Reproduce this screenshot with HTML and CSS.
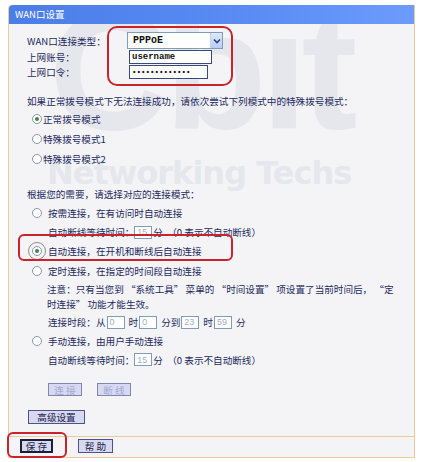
FILE: index.html
```html
<!DOCTYPE html>
<html lang="zh-CN">
<head>
  <meta charset="UTF-8" />
  <title>WAN口设置</title>
  <link rel="stylesheet" href="styles.css">
</head>
<body>

<div class="page">
  <div class="panel">
    <div class="wm wm-logo">Cbit</div>
    <div class="wm wm-text">Networking Techs</div>

    <div class="title">WAN口设置</div>

    <div class="content">
      <div class="form-grid">
        <label class="row-a">WAN口连接类型：</label>
        <div class="select row-a">
          <span>PPPoE</span>
          <span class="arrow">
            <svg width="8" height="6" viewBox="0 0 8 6"><path d="M1 1.5 L4 4.5 L7 1.5" fill="none" stroke="#2a3f8a" stroke-width="1.6"/></svg>
          </span>
        </div>
        <label class="row-b">上网账号：</label>
        <div class="row-b"><input class="text-in user" type="text" value="username"></div>
        <label class="row-c">上网口令：</label>
        <div class="row-c"><input class="text-in pass" type="password" value="abcdefghijklm"></div>
      </div>

      <p class="para p1">如果正常拨号模式下无法连接成功，请依次尝试下列模式中的特殊拨号模式：</p>
      <div class="dial">
        <div class="opt"><span class="radio on"></span>正常拨号模式</div>
        <div class="opt"><span class="radio"></span>特殊拨号模式1</div>
        <div class="opt"><span class="radio"></span>特殊拨号模式2</div>
      </div>

      <p class="para p2">根据您的需要，请选择对应的连接模式：</p>
      <div class="modes">
        <div class="opt h20"><span class="radio"></span>按需连接，在有访问时自动连接</div>
        <div class="sub h18">自动断线等待时间：<input class="mini" value="15">分&nbsp; （0 表示不自动断线）</div>
        <div class="opt h20"><span class="radio on focus"></span>自动连接，在开机和断线后自动连接</div>
        <div class="opt h19"><span class="radio"></span>定时连接，在指定的时间段自动连接</div>
        <p class="note">注意：只有当您到 “系统工具” 菜单的 “时间设置” 项设置了当前时间后， “定<br>时连接” 功能才能生效。</p>
        <div class="sub h18 times">连接时段：从<input class="mini" value="0">时<input class="mini" value="0">分到<input class="mini" value="23">时<input class="mini" value="59">分</div>
        <div class="opt h20"><span class="radio"></span>手动连接，由用户手动连接</div>
        <div class="sub h17">自动断线等待时间：<input class="mini" value="15">分&nbsp; （0 表示不自动断线）</div>
      </div>

      <div class="btn-row">
        <button class="btn off" disabled>连 接</button>
        <button class="btn off" disabled>断 线</button>
      </div>
      <button class="btn adv">高级设置</button>
    </div>

    <div class="footer">
      <button class="btn save">保 存</button>
      <button class="btn help">帮 助</button>
    </div>
  </div>

  <div class="mark mark-top"></div>
  <div class="mark mark-mode"></div>
  <div class="mark mark-save"></div>
</div>

</body>
</html>
```

FILE: styles.css
```css
* {
  margin: 0;
  padding: 0;
  box-sizing: border-box;
}

body {
  background: #fff;
  font-family: "Noto Sans CJK SC", "DejaVu Sans", sans-serif;
  font-size: 9.6px;
  color: #1d2a5e;
}

.page {
  position: relative;
  width: 423px;
  height: 462px;
  padding: 5px 0 0 8px;
}

.panel {
  position: relative;
  width: 407px;
  background: #f4f4f6;
  border: 1px solid #eccb95;
  border-top: none;
  border-radius: 4px 0 0 0;
}

/* watermark */
.wm {
  position: absolute;
  z-index: 0;
  color: #e6e7ed;
  font-family: "Liberation Sans", sans-serif;
  font-weight: bold;
  white-space: nowrap;
  pointer-events: none;
}

.wm-logo {
  left: 40px;
  top: -18px;
  font-size: 168px;
  line-height: 1;
  letter-spacing: -6px;
}

.wm-text {
  left: 38px;
  top: 152px;
  font-size: 32px;
  line-height: 1;
  font-family: "DejaVu Sans", sans-serif;
  letter-spacing: -1px;
}

.title {
  position: relative;
  z-index: 1;
  height: 19px;
  line-height: 19px;
  padding-left: 6px;
  background: linear-gradient(90deg, #4b7de8 0%, #5a8cf4 60%, #6b9cfc 100%);
  color: #fff;
  font-size: 9.5px;
  border-radius: 4px 0 0 0;
}

.content {
  position: relative;
  z-index: 1;
  padding: 8px 0 12px 18px;
  border-bottom: 1px solid #eccb95;
}

.form-grid {
  display: grid;
  grid-template-columns: 100px auto;
  grid-template-rows: 17px 15px 16px;
  align-items: center;
}

.select {
  display: flex;
  align-items: center;
  justify-content: space-between;
  width: 96px;
  height: 17px;
  background: #fff;
  border: 1px solid #7f9db9;
  padding-left: 5px;
  font-family: "Liberation Mono", monospace;
  font-weight: bold;
  font-size: 10px;
  color: #111;
}

.arrow {
  display: flex;
  align-items: center;
  justify-content: center;
  width: 12px;
  height: 15px;
  background: linear-gradient(#dfe8fb, #b9cdf4);
  border-left: 1px solid #c4d2ee;
}

.text-in {
  display: block;
  margin-left: 2px;
  height: 14px;
  border: 1px solid #394a78;
  background: #fff;
  padding: 0 2px;
  font-family: "Liberation Mono", monospace;
  font-weight: bold;
  font-size: 9px;
  color: #111;
  outline: none;
}

.user {
  width: 83px;
}

.pass {
  width: 79px;
  font-size: 7.5px;
}

.para {
  line-height: 14px;
  white-space: nowrap;
}

.p1 {
  margin-top: 14px;
}

.p2 {
  margin-top: 18px;
}

.dial {
  margin-top: 1px;
}

.opt {
  display: flex;
  align-items: center;
  height: 20px;
  padding-left: 5px;
  white-space: nowrap;
}

.dial .radio {
  margin-right: 1px;
}

.modes {
  margin-top: 2px;
}

.modes .radio {
  margin-right: 6px;
}

.radio {
  position: relative;
  display: inline-block;
  width: 10px;
  height: 10px;
  border: 1px solid #8a96ae;
  border-radius: 50%;
  background: #fff;
}

.radio.on::after {
  content: "";
  position: absolute;
  left: 2px;
  top: 2px;
  width: 4px;
  height: 4px;
  border-radius: 50%;
  background: #3b8a3f;
}

.radio.focus {
  outline: 1px solid #8f8f8f;
  outline-offset: 3px;
}

.h20 { height: 20px; }
.h19 { height: 19px; }
.h18 { height: 18px; }
.h17 { height: 17px; }

.sub {
  display: flex;
  align-items: center;
  padding-left: 21px;
  white-space: nowrap;
}

.mini {
  width: 18px;
  height: 13px;
  margin: 0 1px 0 0;
  border: 1px solid #7f9db9;
  background: #fff;
  padding: 0 2px;
  font-family: "Liberation Sans", sans-serif;
  font-size: 9px;
  color: #a6aec2;
  outline: none;
}

.times .mini {
  margin: 0 4px 0 1px;
}

.note {
  margin-top: 2px;
  padding-left: 20px;
  line-height: 15px;
  white-space: nowrap;
}

.note + .sub {
  margin-top: 1px;
}

.btn {
  display: block;
  height: 14px;
  background: #d7d9f3;
  border: 1px solid #4a5583;
  font-family: "Noto Sans CJK SC", sans-serif;
  font-size: 9.6px;
  line-height: 12px;
  color: #1d2346;
  padding: 0;
}

.btn-row {
  display: flex;
  gap: 15px;
  margin-top: 15px;
  padding-left: 21px;
}

.btn.off {
  width: 34px;
  height: 13px;
  color: #a3a9d2;
  border-color: #7f87ad;
}

.adv {
  width: 57px;
  margin-top: 14px;
  margin-left: 1px;
}

.footer {
  display: flex;
  gap: 25px;
  padding: 2px 0 4px 11px;
}

.save {
  width: 33px;
  border: 2px solid #1a1f3a;
  line-height: 10px;
}

.help {
  width: 35px;
}

/* red highlight boxes */
.mark {
  position: absolute;
  border: 2px solid #c9242e;
  z-index: 2;
}

.mark-top {
  left: 107px;
  top: 26px;
  width: 126px;
  height: 60px;
  border-radius: 10px;
}

.mark-mode {
  left: 18px;
  top: 234px;
  width: 215px;
  height: 27px;
  border-radius: 6px;
}

.mark-save {
  left: 7px;
  top: 432px;
  width: 60px;
  height: 26px;
  border-radius: 6px;
}
```
